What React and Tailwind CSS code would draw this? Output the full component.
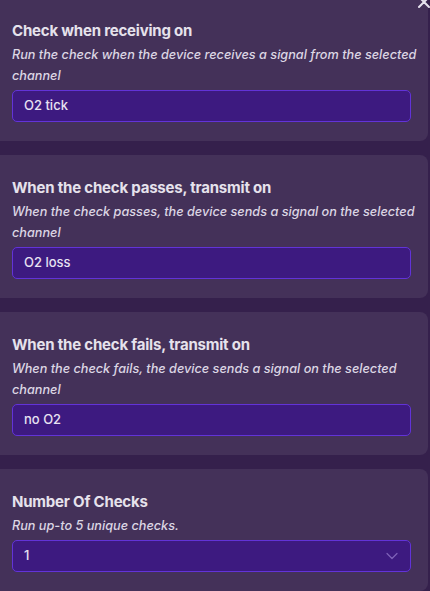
import React from "react";

function Chevron() {
  return (
    <svg width="12" height="8" viewBox="0 0 12 8" fill="none" className="absolute right-[12px] top-1/2 -translate-y-1/2">
      <path d="M1 1.5L6 6.5L11 1.5" stroke="#7f62b8" strokeWidth="1.2" strokeLinecap="round" strokeLinejoin="round" />
    </svg>
  );
}

function Card({ title, lines, value, select }) {
  return (
    <div className="bg-[#443159] rounded-r-[8px] pl-[12px] pr-[17px] pt-[22px] pb-[19px]">
      <div className="text-[15px] font-bold text-[#e6e2ec] leading-[22px] tracking-[-0.2px]">{title}</div>
      <div className="text-[12.7px] italic font-medium text-[#dcd6e4] leading-[21px] mt-[2px]">
        {lines.map((l, i) => (
          <div key={i} className="whitespace-nowrap">{l}</div>
        ))}
      </div>
      <div className="relative mt-[4px] h-[32px] rounded-[5px] border border-[#6233d8] bg-[#3d1a80] flex items-center pl-[11px] text-[13px] font-medium text-[#e8e2f2]">
        {value}
        {select && <Chevron />}
      </div>
    </div>
  );
}

export default function App() {
  return (
    <div className="relative w-[430px] h-[591px] overflow-hidden bg-[#35204c]" style={{ fontFamily: "Inter, 'Noto Sans', sans-serif" }}>
      <div className="relative w-[428px] -mt-[2px] flex flex-col gap-[14px]">
        <Card
          title="Check when receiving on"
          lines={["Run the check when the device receives a signal from the selected", "channel"]}
          value="O2 tick"
        />
        <Card
          title="When the check passes, transmit on"
          lines={["When the check passes, the device sends a signal on the selected", "channel"]}
          value="O2 loss"
        />
        <Card
          title="When the check fails, transmit on"
          lines={["When the check fails, the device sends a signal on the selected", "channel"]}
          value="no O2"
        />
        <Card
          title="Number Of Checks"
          lines={["Run up-to 5 unique checks."]}
          value="1"
          select
        />
      </div>
      <svg className="absolute top-[-5px] right-[-1px]" width="14" height="14" viewBox="0 0 14 14">
        <path d="M2 2L12 12M12 2L2 12" stroke="#e6e2ee" strokeWidth="2" strokeLinecap="round" />
      </svg>
    </div>
  );
}
